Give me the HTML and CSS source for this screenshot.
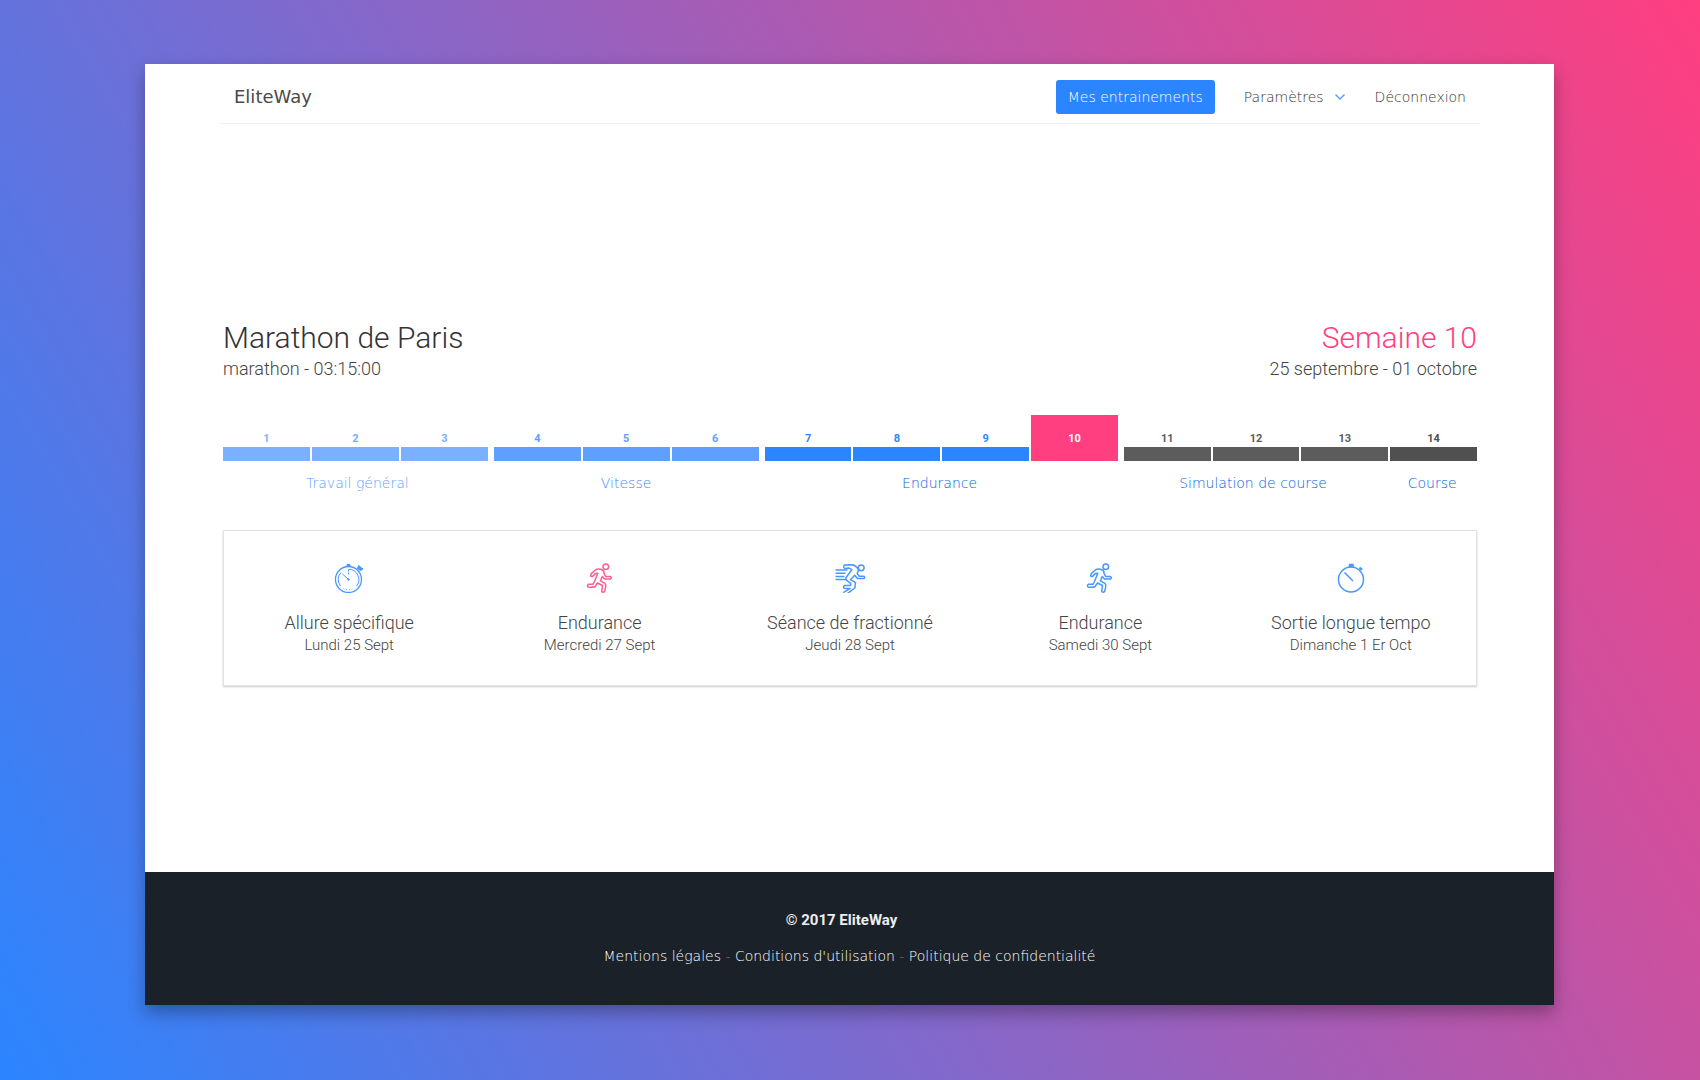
FILE: index.html
```html
<!DOCTYPE html>
<html lang="fr">
<head>
  <meta charset="utf-8">
  <meta name="viewport" content="width=device-width, initial-scale=1">
  <title>EliteWay - Mes entrainements</title>
  <link rel="stylesheet" href="styles.css">
</head>

<body>
<div class="page">

  <header class="header">
    <a class="logo" href="#">EliteWay</a>
    <nav class="nav">
      <a class="nav-link active" href="#">Mes entrainements</a>
      <button class="nav-link dropdown" type="button">Paramètres
        <svg class="chevron" viewBox="0 0 12 8"><path d="M1.500 1.500 6 6l4.500-4.500"/></svg>
      </button>
      <a class="nav-link" href="#">Déconnexion</a>
    </nav>
  </header>

  <main class="main">
    <div class="titles">
      <div>
        <h1>Marathon de Paris</h1>
        <p>marathon - 03:15:00</p>
      </div>
      <div class="week">
        <h2>Semaine 10</h2>
        <p>25 septembre - 01 octobre</p>
      </div>
    </div>

    <div class="timeline">
      <div class="phase general"><a href="#">1</a><a href="#">2</a><a href="#">3</a></div>
      <div class="phase vitesse"><a href="#">4</a><a href="#">5</a><a href="#">6</a></div>
      <div class="phase endurance"><a href="#">7</a><a href="#">8</a><a href="#">9</a><a class="current" href="#">10</a></div>
      <div class="phase simulation"><a href="#">11</a><a href="#">12</a><a href="#">13</a><a class="race" href="#">14</a></div>
    </div>
    <div class="labels">
      <span class="label-general">Travail général</span>
      <span class="label-vitesse">Vitesse</span>
      <span>Endurance</span>
      <span>Simulation de course</span>
      <span>Course</span>
    </div>

    <div class="sessions">
      <div class="session">
        <svg class="icon" viewBox="0 0 32 32">
          <circle cx="15.500" cy="18.500" r="13" stroke-width="1.300"/>
          <g stroke-width="1">
            <path d="M15.500 8.200a10.300 10.300 0 0 1 8 16.800M7.500 25a10.300 10.300 0 0 1 .5-13.500"/>
            <path d="M10.500 27.500a10.300 10.300 0 0 0 10 0" stroke-dasharray="1 1.700"/>
            <path d="M15.500 8.500v5" stroke-dasharray="2 1"/>
            <path d="M9.500 13l6 5.500"/>
            <circle class="fill" cx="15.500" cy="18.500" r=".8"/>
            <path class="fill" d="M14 3.500h3v2h-3z"/>
            <path class="fill" d="M24.500 7.500l1-3 4.500 3.500-2.500 1.500z"/>
          </g>
        </svg>
        <h3>Allure spécifique</h3>
        <p>Lundi 25 Sept</p>
      </div>
      <div class="session">
        <svg class="icon current-icon" viewBox="0 0 32 32">
          <use href="#runner"/>
        </svg>
        <h3>Endurance</h3>
        <p>Mercredi 27 Sept</p>
      </div>
      <div class="session">
        <svg class="icon" viewBox="0 0 32 32">
          <path d="M1.500 9h12M1.500 12.300h10M1.500 15.600h9M1.500 18.500h11"/>
          <circle cx="27.200" cy="6.800" r="2.900"/>
          <path d="M10.300 4.100 17.500 3.700q3.800.3 6 3.300l1 2.500-1.300 3 2 2.700h4.800q1.200 1.200 0 2.400h-6.500l-2.800-3.400-4.200 4.500 5 2.900-.6 5.400-8.900 6.500h-2.300l.3-2.300 6-3.700-5.700-.2q-1.600-1.300 0-2.700h6.200l.3-2-4.300-3.400q-1.400-1.500 0-3.200l5.300-7.300-2.500-1.700-4.600.4q-2-1.300-.4-3z"/>
        </svg>
        <h3>Séance de fractionné</h3>
        <p>Jeudi 28 Sept</p>
      </div>
      <div class="session">
        <svg class="icon" viewBox="0 0 32 32">
          <g id="runner">
            <circle cx="21.800" cy="5.700" r="2.800"/>
            <path d="M7.200 12.600 12 8.500q3-1 6 .3 2.300 1 2 3.500l1.800 3.300h4.700q1.600 1.100 0 2.500h-6l-2.300-2.600-1.700 4.300 4.400 2.500q1.200 1.200.8 3.500l-1 4.600q-1.600 1.500-3 0l.8-5.900-5-2.500-2.500 3.600q-1 .9-6.700.6-1.800-1.400 0-2.900h4.600l1.600-2.800 3.300-8.200-2.500.3-3 3q-2.500.2-1.100-2.500z"/>
          </g>
        </svg>
        <h3>Endurance</h3>
        <p>Samedi 30 Sept</p>
      </div>
      <div class="session">
        <svg class="icon" viewBox="0 0 32 32">
          <circle cx="16" cy="18.500" r="12.500"/>
          <path d="M9.500 11.500l8.500 8.500" stroke-width="1.500"/>
          <path class="fill" d="M14.500 3.500h3.500v2h-3.500z"/>
          <path d="M24.500 6.500l2.700 2.300M24.800 8.700l1-1" stroke-width="2"/>
        </svg>
        <h3>Sortie longue tempo</h3>
        <p>Dimanche 1 Er Oct</p>
      </div>
    </div>
  </main>

  <footer class="footer">
    <p class="copyright">© 2017 EliteWay</p>
    <p class="legal"><a href="#">Mentions légales</a> - <a href="#">Conditions d'utilisation</a> - <a href="#">Politique de confidentialité</a></p>
  </footer>

</div>
</body>
</html>
```
FILE: styles.css
```css
* {
  box-sizing: border-box;
}

body {
  margin: 0;
  padding: 64px 146px 75px 145px;
  min-height: 100vh;
  display: flex;
  background: linear-gradient(60deg, #2b85ff, #ff3f80);
  font-family: Roboto, sans-serif;
  font-weight: 300;
  color: #444;
}

h1, h2, h3, p {
  margin: 0;
  font-weight: 300;
}

a {
  color: inherit;
  text-decoration: none;
}

.page {
  flex: 1;
  display: flex;
  flex-direction: column;
  background: #fff;
  box-shadow: 0 8px 16px rgba(0, 0, 0, 0.3);
}

/* header */
.header {
  display: flex;
  align-items: center;
  justify-content: space-between;
  height: 60px;
  margin: 0 74px;
  padding: 6px 2px 0;
  border-bottom: 1px solid #f2f2f2;
}

.logo {
  margin-left: 13px;
  font-family: "DejaVu Sans", sans-serif;
  font-size: 18px;
  font-weight: 400;
  color: #4a4a4a;
}

.nav {
  display: flex;
  gap: 17px;
}

.nav-link {
  display: flex;
  align-items: center;
  height: 34px;
  padding: 0 12px;
  border: 0;
  border-radius: 3px;
  background: none;
  font-family: "DejaVu Sans", sans-serif;
  font-size: 14px;
  font-weight: 200;
  color: #333;
}

.nav-link.active {
  background: #2b85ff;
  color: #fff;
}

.nav-link.dropdown {
  padding-right: 0;
}

.chevron {
  width: 12px;
  height: 8px;
  margin-left: 10px;
  fill: none;
  stroke: #5ea2ff;
  stroke-width: 1.500;
}

/* training plan */
.main {
  flex: 1;
  display: flex;
  flex-direction: column;
  justify-content: center;
  padding: 9px 77px 0 78px;
}

.titles {
  display: flex;
  justify-content: space-between;
  margin-bottom: 33px;
}

.titles h1,
.titles h2 {
  font-size: 30px;
  line-height: 36px;
  color: #333;
}

.titles p {
  font-size: 18px;
  line-height: 26px;
}

.week {
  text-align: right;
}

.titles .week h2 {
  color: #ff3f80;
}

.timeline {
  display: grid;
  grid-template-columns: 3fr 3fr 4fr 4fr;
  gap: 6px;
}

.phase {
  display: flex;
  gap: 2px;
}

.phase a {
  flex: 1;
  height: 46px;
  padding-top: 16px;
  border-bottom: 14px solid;
  font-size: 11px;
  line-height: 16px;
  font-weight: 700;
  text-align: center;
}

.general a {
  color: #7ab0ff;
}

.vitesse a {
  color: #5f9fff;
}

.endurance a {
  color: #2b85ff;
}

.simulation a {
  color: #5c5c5c;
}

.simulation .race {
  color: #505050;
}

.endurance .current {
  background: #ff3f80;
  border-color: #ff3f80;
  color: #fff;
}

.labels {
  display: grid;
  grid-template-columns: 3fr 3fr 4fr 3fr 1fr;
  margin-top: 10px;
  font-family: "DejaVu Sans", sans-serif;
  font-size: 14px;
  font-weight: 200;
  line-height: 24px;
  text-align: center;
  color: #0062e6;
}

.label-general {
  color: #5f9fff;
}

.label-vitesse {
  color: #3f8cff;
}

.sessions {
  display: grid;
  grid-template-columns: repeat(5, 1fr);
  margin-top: 35px;
  padding: 30px 0;
  border: 1px solid #e2e2e2;
  box-shadow: 0 1px 2px rgba(0, 0, 0, 0.2);
}

.session {
  display: flex;
  flex-direction: column;
  align-items: center;
}

.session h3 {
  margin-top: 18px;
  font-size: 18px;
  line-height: 24px;
}

.session p {
  font-size: 15px;
  line-height: 20px;
}

.icon {
  width: 32px;
  height: 32px;
  fill: none;
  stroke: #4a97ff;
  stroke-width: 1.500;
  stroke-linejoin: round;
}

.icon .fill {
  fill: #4a97ff;
}

.current-icon {
  stroke: #ff5c93;
}

/* footer */
.footer {
  padding: 36px 16px 37px;
  background: #1b2129;
  color: #777;
  text-align: center;
}

.copyright {
  padding-right: 16px;
  font-size: 15px;
  line-height: 24px;
  font-weight: 700;
  color: #eee;
}

.legal {
  margin-top: 13px;
  font-family: "DejaVu Sans", sans-serif;
  font-size: 14px;
  font-weight: 200;
  line-height: 23px;
}

.legal a {
  color: #fff;
}
```
